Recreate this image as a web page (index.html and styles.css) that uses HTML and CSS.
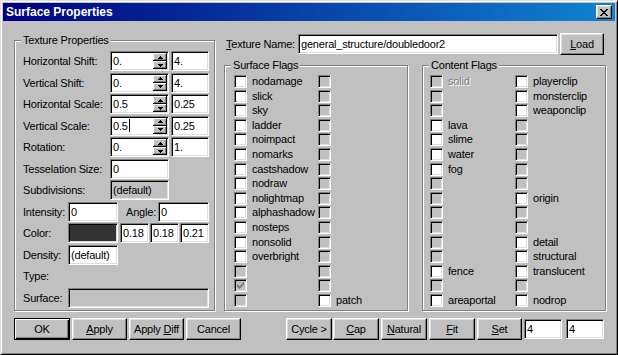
FILE: index.html
```html
<!DOCTYPE html>
<html>
<head>
    <title>Surface Properties</title>
    <meta charset="utf-8">
    <link rel="stylesheet" href="styles.css">
</head>
<body>
    <div class="window">
        <div class="titlebar">
            <span class="title">Surface Properties</span>
            <div class="close">
                <svg width="8" height="7" viewBox="0 0 8 7"><path d="M0 0h2v1h-2zM6 0h2v1h-2zM1 1h2v1h-2zM5 1h2v1h-2zM2 2h4v1h-4zM3 3h2v1h-2zM2 4h4v1h-4zM1 5h2v1h-2zM5 5h2v1h-2zM0 6h2v1h-2zM6 6h2v1h-2z"/></svg>
            </div>
        </div>
        <div class="dialog">
            <div class="main">
                <div class="group texprops">
                    <span class="legend">Texture Properties</span>
                    <div class="row">
                        <span class="lbl">Horizontal Shift:</span>
                        <div class="edit spin"><span class="val">0.</span><div class="updown"><div class="half"><svg width="5" height="3"><path d="M2 0h1v1h-1zM1 1h3v1h-3zM0 2h5v1h-5z"/></svg></div><div class="half"><svg width="5" height="3"><path d="M0 0h5v1h-5zM1 1h3v1h-3zM2 2h1v1h-1z"/></svg></div></div></div>
                        <div class="edit second">4.</div>
                    </div>
                    <div class="row">
                        <span class="lbl">Vertical Shift:</span>
                        <div class="edit spin"><span class="val">0.</span><div class="updown"><div class="half"><svg width="5" height="3"><path d="M2 0h1v1h-1zM1 1h3v1h-3zM0 2h5v1h-5z"/></svg></div><div class="half"><svg width="5" height="3"><path d="M0 0h5v1h-5zM1 1h3v1h-3zM2 2h1v1h-1z"/></svg></div></div></div>
                        <div class="edit second">4.</div>
                    </div>
                    <div class="row">
                        <span class="lbl">Horizontal Scale:</span>
                        <div class="edit spin"><span class="val">0.5</span><div class="updown"><div class="half"><svg width="5" height="3"><path d="M2 0h1v1h-1zM1 1h3v1h-3zM0 2h5v1h-5z"/></svg></div><div class="half"><svg width="5" height="3"><path d="M0 0h5v1h-5zM1 1h3v1h-3zM2 2h1v1h-1z"/></svg></div></div></div>
                        <div class="edit second">0.25</div>
                    </div>
                    <div class="row">
                        <span class="lbl">Vertical Scale:</span>
                        <div class="edit spin"><span class="val">0.5<span class="caret"></span></span><div class="updown"><div class="half"><svg width="5" height="3"><path d="M2 0h1v1h-1zM1 1h3v1h-3zM0 2h5v1h-5z"/></svg></div><div class="half"><svg width="5" height="3"><path d="M0 0h5v1h-5zM1 1h3v1h-3zM2 2h1v1h-1z"/></svg></div></div></div>
                        <div class="edit second">0.25</div>
                    </div>
                    <div class="row">
                        <span class="lbl">Rotation:</span>
                        <div class="edit spin"><span class="val">0.</span><div class="updown"><div class="half"><svg width="5" height="3"><path d="M2 0h1v1h-1zM1 1h3v1h-3zM0 2h5v1h-5z"/></svg></div><div class="half"><svg width="5" height="3"><path d="M0 0h5v1h-5zM1 1h3v1h-3zM2 2h1v1h-1z"/></svg></div></div></div>
                        <div class="edit second">1.</div>
                    </div>
                    <div class="row">
                        <span class="lbl">Tesselation Size:</span>
                        <div class="edit single">0</div>
                    </div>
                    <div class="row">
                        <span class="lbl">Subdivisions:</span>
                        <div class="edit single readonly">(default)</div>
                    </div>
                    <div class="row">
                        <span class="lbl short">Intensity:</span>
                        <div class="edit half-w">0</div>
                        <span class="lbl angle">Angle:</span>
                        <div class="edit angle-w">0</div>
                    </div>
                    <div class="row">
                        <span class="lbl short">Color:</span>
                        <div class="edit swatch"></div>
                        <div class="edit rgb">0.18</div>
                        <div class="edit rgb">0.18</div>
                        <div class="edit rgb">0.21</div>
                    </div>
                    <div class="row">
                        <span class="lbl short">Density:</span>
                        <div class="edit half-w">(default)</div>
                    </div>
                    <div class="row">
                        <span class="lbl short">Type:</span>
                    </div>
                    <div class="row">
                        <span class="lbl short">Surface:</span>
                        <div class="edit surface readonly"></div>
                    </div>
                </div>

                <div class="right">
                    <div class="name-row">
                        <span class="name-lbl"><u>T</u>exture Name:</span>
                        <div class="edit name">general_structure/doubledoor2</div>
                        <div class="btn load"><span><u>L</u>oad</span></div>
                    </div>
                    <div class="flags">
                        <div class="group sflags">
                            <span class="legend">Surface Flags</span>
                            <div class="checks">
                                <div class="col c1">
                                    <div class="chk"><span class="box"></span>nodamage</div>
                                    <div class="chk"><span class="box"></span>slick</div>
                                    <div class="chk"><span class="box"></span>sky</div>
                                    <div class="chk"><span class="box"></span>ladder</div>
                                    <div class="chk"><span class="box"></span>noimpact</div>
                                    <div class="chk"><span class="box"></span>nomarks</div>
                                    <div class="chk"><span class="box"></span>castshadow</div>
                                    <div class="chk"><span class="box"></span>nodraw</div>
                                    <div class="chk"><span class="box"></span>nolightmap</div>
                                    <div class="chk"><span class="box"></span>alphashadow</div>
                                    <div class="chk"><span class="box"></span>nosteps</div>
                                    <div class="chk"><span class="box"></span>nonsolid</div>
                                    <div class="chk"><span class="box"></span>overbright</div>
                                    <div class="chk"><span class="box off"></span></div>
                                    <div class="chk"><span class="box off"><svg width="7" height="7"><path d="M6 0h1v1h-1zM5 1h2v1h-2zM0 2h1v1h-1zM4 2h3v1h-3zM0 3h2v1h-2zM3 3h3v1h-3zM0 4h5v1h-5zM1 5h3v1h-3zM2 6h1v1h-1z"/></svg></span></div>
                                    <div class="chk"><span class="box off"></span></div>
                                </div>
                                <div class="col">
                                    <div class="chk"><span class="box off"></span></div>
                                    <div class="chk"><span class="box off"></span></div>
                                    <div class="chk"><span class="box off"></span></div>
                                    <div class="chk"><span class="box off"></span></div>
                                    <div class="chk"><span class="box off"></span></div>
                                    <div class="chk"><span class="box off"></span></div>
                                    <div class="chk"><span class="box off"></span></div>
                                    <div class="chk"><span class="box off"></span></div>
                                    <div class="chk"><span class="box off"></span></div>
                                    <div class="chk"><span class="box off"></span></div>
                                    <div class="chk"><span class="box off"></span></div>
                                    <div class="chk"><span class="box off"></span></div>
                                    <div class="chk"><span class="box off"></span></div>
                                    <div class="chk"><span class="box off"></span></div>
                                    <div class="chk"><span class="box off"></span></div>
                                    <div class="chk"><span class="box"></span>patch</div>
                                </div>
                            </div>
                        </div>
                        <div class="group cflags">
                            <span class="legend">Content Flags</span>
                            <div class="checks">
                                <div class="col c1">
                                    <div class="chk disabled"><span class="box off"></span>solid</div>
                                    <div class="chk"><span class="box off"></span></div>
                                    <div class="chk"><span class="box off"></span></div>
                                    <div class="chk"><span class="box"></span>lava</div>
                                    <div class="chk"><span class="box"></span>slime</div>
                                    <div class="chk"><span class="box"></span>water</div>
                                    <div class="chk"><span class="box"></span>fog</div>
                                    <div class="chk"><span class="box off"></span></div>
                                    <div class="chk"><span class="box off"></span></div>
                                    <div class="chk"><span class="box off"></span></div>
                                    <div class="chk"><span class="box off"></span></div>
                                    <div class="chk"><span class="box off"></span></div>
                                    <div class="chk"><span class="box off"></span></div>
                                    <div class="chk"><span class="box"></span>fence</div>
                                    <div class="chk"><span class="box off"></span></div>
                                    <div class="chk"><span class="box"></span>areaportal</div>
                                </div>
                                <div class="col">
                                    <div class="chk"><span class="box"></span>playerclip</div>
                                    <div class="chk"><span class="box"></span>monsterclip</div>
                                    <div class="chk"><span class="box"></span>weaponclip</div>
                                    <div class="chk"><span class="box off"></span></div>
                                    <div class="chk"><span class="box off"></span></div>
                                    <div class="chk"><span class="box off"></span></div>
                                    <div class="chk"><span class="box off"></span></div>
                                    <div class="chk"><span class="box off"></span></div>
                                    <div class="chk"><span class="box"></span>origin</div>
                                    <div class="chk"><span class="box off"></span></div>
                                    <div class="chk"><span class="box off"></span></div>
                                    <div class="chk"><span class="box"></span>detail</div>
                                    <div class="chk"><span class="box"></span>structural</div>
                                    <div class="chk"><span class="box"></span>translucent</div>
                                    <div class="chk"><span class="box off"></span></div>
                                    <div class="chk"><span class="box"></span>nodrop</div>
                                </div>
                            </div>
                        </div>
                    </div>
                </div>
            </div>

            <div class="buttons">
                <div class="btn ok"><span>OK</span></div>
                <div class="btn wide"><span><u>A</u>pply</span></div>
                <div class="btn wide"><span>Apply <u>D</u>iff</span></div>
                <div class="btn wide"><span>Cancel</span></div>
                <div class="btn tool cycle"><span>Cycle &gt;</span></div>
                <div class="btn tool cap"><span><u>C</u>ap</span></div>
                <div class="btn tool"><span><u>N</u>atural</span></div>
                <div class="btn tool"><span><u>F</u>it</span></div>
                <div class="btn tool set"><span><u>S</u>et</span></div>
                <div class="edit fitval">4</div>
                <div class="edit fitval last">4</div>
            </div>
        </div>
    </div>
</body>
</html>
```

FILE: styles.css
```css
* {
    box-sizing: border-box;
    margin: 0px;
    padding: 0px;
}

body {
    background-color: #c0c0c0;
    font-family: "Liberation Sans", Arial, sans-serif;
    font-size: 11px;
    letter-spacing: -0.2px;
    color: black;
}

.window {
    width: 618px;
    height: 355px;
    border: 1px solid;
    border-color: #dfdfdf #000 #000 #dfdfdf;
    box-shadow: inset 1px 1px #fff, inset -1px -1px #808080;
    padding: 2px;
    background-color: #c0c0c0;
}

.titlebar {
    height: 18px;
    display: flex;
    align-items: center;
    justify-content: space-between;
    padding: 0 3px 0 3px;
    background: linear-gradient(90deg, #000080, #1084d0);
}

.title {
    color: white;
    font-weight: bold;
    font-size: 12px;
    letter-spacing: 0px;
}

.close {
    width: 16px;
    height: 14px;
    display: flex;
    align-items: center;
    justify-content: center;
    background-color: #c0c0c0;
    border: 1px solid;
    border-color: #fff #000 #000 #fff;
    box-shadow: inset -1px -1px #808080, inset 1px 1px #dfdfdf;
}

.dialog {
    padding-left: 11px;
}

.main {
    display: flex;
    align-items: flex-start;
    padding-top: 12px;
}

/* group boxes */

.group {
    position: relative;
    border: 1px solid #808080;
    box-shadow: inset 1px 1px #fff, 1px 1px #fff;
}

.legend {
    position: absolute;
    top: -7px;
    left: 6px;
    padding: 0 2px;
    line-height: 13px;
    background-color: #c0c0c0;
}

.texprops {
    width: 201px;
    height: 271px;
    margin-top: 7px;
    padding: 10px 0 0 8px;
}

.row {
    display: flex;
    align-items: flex-start;
    height: 21.5px;
}

.lbl {
    width: 87px;
    line-height: 20px;
    white-space: nowrap;
}

.lbl.short {
    width: 45px;
}

.lbl.angle {
    width: 32px;
    margin-left: 8px;
}

/* edit fields */

.edit {
    height: 20px;
    padding: 0 2px;
    line-height: 18px;
    white-space: nowrap;
    overflow: hidden;
    background-color: #fff;
    border: 1px solid;
    border-color: #808080 #fff #fff #808080;
    box-shadow: inset 1px 1px #000, inset -1px -1px #dfdfdf;
}

.edit.readonly {
    background-color: #c0c0c0;
}

.spin {
    width: 59px;
    display: flex;
    padding-right: 0;
}

.spin .val {
    flex: 1;
    display: flex;
    align-items: center;
}

.caret {
    display: inline-block;
    width: 1px;
    height: 13px;
    margin-left: 1px;
    background-color: #000;
}

.updown {
    width: 14px;
    margin: 1px 1px 1px 0;
    display: flex;
    flex-direction: column;
}

.half {
    height: 8px;
    display: flex;
    align-items: center;
    justify-content: center;
    background-color: #c0c0c0;
    box-shadow: inset -1px -1px #000, inset 1px 1px #fff, inset -2px -2px #808080;
}

.second {
    width: 38px;
    margin-left: 2px;
}

.single {
    width: 59px;
}

.half-w {
    width: 50px;
}

.angle-w {
    width: 51px;
}

.swatch {
    width: 50px;
    background-color: #333;
}

.rgb {
    width: 29px;
    margin-left: 1px;
}

.swatch + .rgb {
    margin-left: 2px;
}

.surface {
    width: 141px;
}

/* right column */

.right {
    margin-left: 9px;
}

.name-row {
    display: flex;
    align-items: center;
    height: 22px;
    padding-left: 2px;
}

.name-lbl {
    width: 72px;
    white-space: nowrap;
}

.edit.name {
    width: 260px;
}

.flags {
    display: flex;
    gap: 14px;
    margin-top: 10px;
}

.sflags,
.cflags {
    width: 184px;
    height: 246px;
    padding-top: 9px;
}

.sflags {
    padding-left: 9px;
}

.cflags {
    padding-left: 7px;
}

.checks {
    display: flex;
}

.col.c1 {
    width: 84px;
}

.cflags .col.c1 {
    width: 85px;
}

.chk {
    display: flex;
    align-items: flex-start;
    height: 14.6px;
    line-height: 13px;
    white-space: nowrap;
}

.box {
    width: 13px;
    height: 13px;
    margin-right: 5px;
    flex-shrink: 0;
    display: flex;
    align-items: center;
    justify-content: center;
    background-color: #fff;
    border: 1px solid;
    border-color: #808080 #fff #fff #808080;
    box-shadow: inset 1px 1px #000, inset -1px -1px #dfdfdf;
}

.box.off {
    background-color: #c0c0c0;
}

.box svg {
    fill: #808080;
}

.chk.disabled {
    color: #808080;
    text-shadow: 1px 1px #fff;
}

/* buttons */

.buttons {
    display: flex;
    align-items: center;
    height: 22px;
    margin-top: 7px;
}

.btn {
    height: 22px;
    display: flex;
    align-items: center;
    justify-content: center;
    white-space: nowrap;
    background-color: #c0c0c0;
    border: 1px solid;
    border-color: #fff #000 #000 #fff;
    box-shadow: inset -1px -1px #808080, inset 1px 1px #dfdfdf;
}

.btn.ok {
    width: 56px;
    border-color: #000;
    box-shadow: inset 1px 1px #fff, inset -1px -1px #000, inset -2px -2px #808080;
}

.btn.wide {
    width: 55px;
    margin-left: 2px;
}

.btn.tool {
    width: 46px;
    margin-left: 2px;
}

.btn.cycle {
    margin-left: 45px;
}

.btn.cap {
    margin-left: 1px;
}

.btn.set {
    width: 45px;
}

.btn.load {
    width: 44px;
    margin-left: 2px;
}

.fitval {
    width: 38px;
    margin-left: 2px;
}

.fitval.last {
    margin-left: 4px;
}
```
